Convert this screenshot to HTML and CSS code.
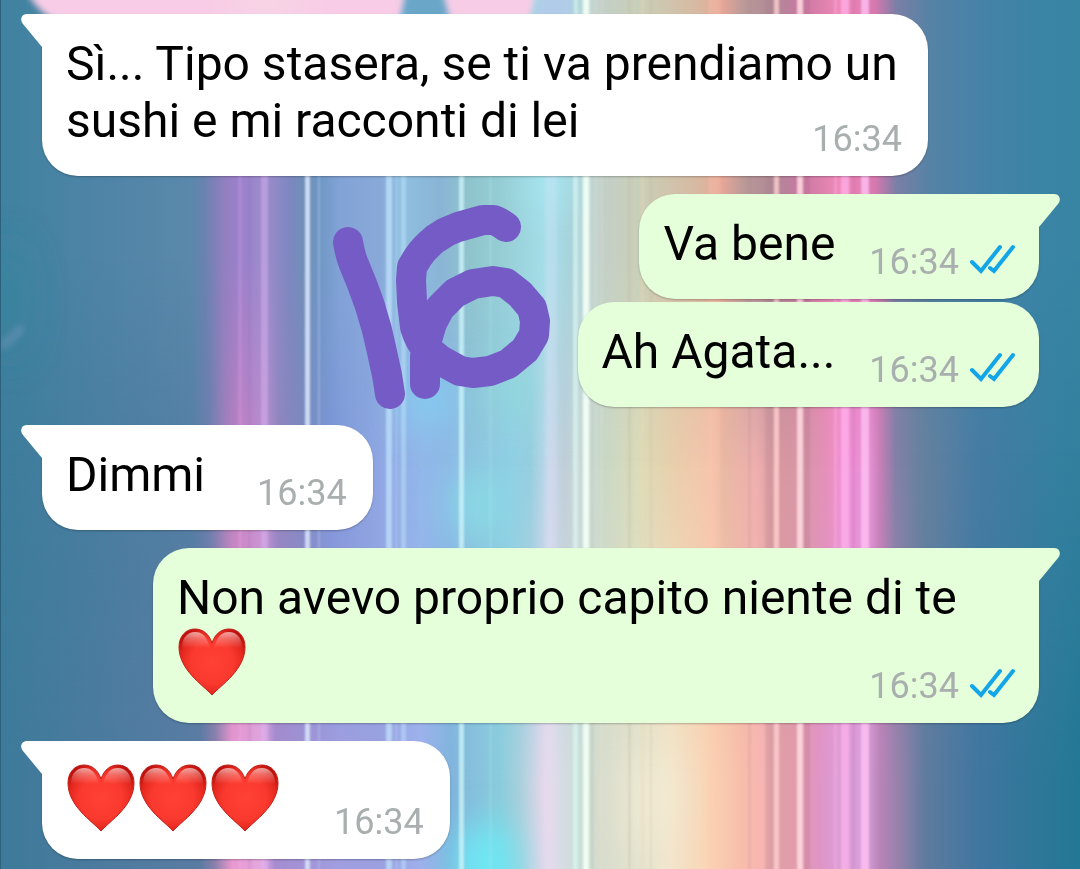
FILE: index.html
```html
<!DOCTYPE html>
<html lang="it">
<head>
  <meta charset="UTF-8">
  <title>Chat</title>
  <meta name="viewport" content="width=device-width, initial-scale=1.0">
  <link rel="stylesheet" href="styles.css">
</head>
<body>
  <!-- Wallpaper -->
  <svg class="wallpaper" viewBox="0 0 1080 869" preserveAspectRatio="none" aria-hidden="true">
    <defs>
      <linearGradient id="upper" gradientUnits="userSpaceOnUse" x1="0" x2="1080" y1="0" y2="0">
        <stop offset="0" stop-color="#3f82a0"/><stop offset=".093" stop-color="#4f84a6"/>
        <stop offset=".176" stop-color="#5a88aa"/><stop offset=".19" stop-color="#6b82b0"/>
        <stop offset=".208" stop-color="#927fc0"/><stop offset=".222" stop-color="#9a80cc"/>
        <stop offset=".245" stop-color="#9d8ccc"/><stop offset=".268" stop-color="#7d87c0"/>
        <stop offset=".282" stop-color="#6f8fb8"/><stop offset=".296" stop-color="#6f97c4"/>
        <stop offset=".315" stop-color="#82a3d6"/><stop offset=".352" stop-color="#88a9d8"/>
        <stop offset=".37" stop-color="#8fc0e0"/><stop offset=".407" stop-color="#8ab4d6"/>
        <stop offset=".435" stop-color="#8fc4cc"/><stop offset=".463" stop-color="#96cdd4"/>
        <stop offset=".509" stop-color="#a6dfea"/><stop offset=".532" stop-color="#a8d0d8"/>
        <stop offset=".546" stop-color="#cde0dc"/><stop offset=".556" stop-color="#c3cfc8"/>
        <stop offset=".593" stop-color="#c9cfb8"/><stop offset=".648" stop-color="#d8b8a0"/>
        <stop offset=".667" stop-color="#e8a898"/><stop offset=".69" stop-color="#b89898"/>
        <stop offset=".718" stop-color="#b08898"/><stop offset=".741" stop-color="#c878a0"/>
        <stop offset=".778" stop-color="#f088b8"/><stop offset=".81" stop-color="#d878b0"/>
        <stop offset=".83" stop-color="#7a7fa6"/><stop offset=".861" stop-color="#5583a5"/>
        <stop offset=".907" stop-color="#4682a8"/><stop offset=".963" stop-color="#3a84a6"/>
        <stop offset="1" stop-color="#3884a3"/>
      </linearGradient>
      <linearGradient id="middle" gradientUnits="userSpaceOnUse" x1="0" x2="1080" y1="0" y2="0">
        <stop offset="0" stop-color="#3d7d9c"/><stop offset=".176" stop-color="#547fa4"/>
        <stop offset=".194" stop-color="#6c7fae"/><stop offset=".211" stop-color="#a87fbc"/>
        <stop offset=".222" stop-color="#c480c2"/><stop offset=".245" stop-color="#bc8fd0"/>
        <stop offset=".259" stop-color="#8f85bd"/><stop offset=".282" stop-color="#7d88c0"/>
        <stop offset=".306" stop-color="#7b95d8"/><stop offset=".352" stop-color="#90a8e4"/>
        <stop offset=".389" stop-color="#92b8ea"/><stop offset=".417" stop-color="#8fb9e8"/>
        <stop offset=".435" stop-color="#8ec3e0"/><stop offset=".472" stop-color="#90d0e6"/>
        <stop offset=".491" stop-color="#95cfe0"/><stop offset=".509" stop-color="#c4d8ea"/>
        <stop offset=".523" stop-color="#c0ced8"/><stop offset=".546" stop-color="#d0e0d8"/>
        <stop offset=".556" stop-color="#c8d8c8"/><stop offset=".593" stop-color="#dcdcb8"/>
        <stop offset=".62" stop-color="#e8d0ac"/><stop offset=".657" stop-color="#f6c4ac"/>
        <stop offset=".671" stop-color="#e8b8a4"/><stop offset=".699" stop-color="#efb0b0"/>
        <stop offset=".722" stop-color="#d898a0"/><stop offset=".745" stop-color="#d898a8"/>
        <stop offset=".764" stop-color="#e690b8"/><stop offset=".782" stop-color="#f490d8"/>
        <stop offset=".806" stop-color="#e490d4"/><stop offset=".815" stop-color="#c880b8"/>
        <stop offset=".829" stop-color="#8480a8"/><stop offset=".852" stop-color="#68829f"/>
        <stop offset=".907" stop-color="#457ca4"/><stop offset=".981" stop-color="#3580a0"/>
        <stop offset="1" stop-color="#337f9e"/>
      </linearGradient>
      <linearGradient id="lower" gradientUnits="userSpaceOnUse" x1="0" x2="1080" y1="0" y2="0">
        <stop offset="0" stop-color="#3d7a9a"/><stop offset=".185" stop-color="#5a7ba2"/>
        <stop offset=".199" stop-color="#8a80ac"/><stop offset=".215" stop-color="#ea98d0"/>
        <stop offset=".243" stop-color="#e4a8e0"/><stop offset=".255" stop-color="#a58cd0"/>
        <stop offset=".315" stop-color="#a09ee0"/><stop offset=".352" stop-color="#9aa0e0"/>
        <stop offset=".389" stop-color="#9fb0ec"/><stop offset=".417" stop-color="#80b4dc"/>
        <stop offset=".435" stop-color="#85bedc"/><stop offset=".463" stop-color="#8accdc"/>
        <stop offset=".481" stop-color="#a8d0dc"/><stop offset=".505" stop-color="#e8d8ec"/>
        <stop offset=".518" stop-color="#d8dce4"/><stop offset=".537" stop-color="#c8ded8"/>
        <stop offset=".556" stop-color="#d8dccc"/><stop offset=".593" stop-color="#e4e4d0"/>
        <stop offset=".62" stop-color="#f2e6cc"/><stop offset=".657" stop-color="#f9d4b4"/>
        <stop offset=".685" stop-color="#f8beaa"/><stop offset=".708" stop-color="#f8b4b4"/>
        <stop offset=".718" stop-color="#dfa0a8"/><stop offset=".741" stop-color="#e29aac"/>
        <stop offset=".759" stop-color="#e094c8"/><stop offset=".773" stop-color="#dc9cd4"/>
        <stop offset=".801" stop-color="#d8a0dc"/><stop offset=".815" stop-color="#b884b8"/>
        <stop offset=".838" stop-color="#8a80a8"/><stop offset=".856" stop-color="#5f7b9e"/>
        <stop offset=".907" stop-color="#3f76a0"/><stop offset="1" stop-color="#227894"/>
      </linearGradient>
      <linearGradient id="fade-out" x2="0" y2="1">
        <stop offset=".3" stop-color="#fff"/><stop offset=".54" stop-color="#000"/>
      </linearGradient>
      <linearGradient id="fade-in" x2="0" y2="1">
        <stop offset=".52" stop-color="#000"/><stop offset=".9" stop-color="#fff"/>
      </linearGradient>
      <mask id="mask-top"><rect width="1080" height="869" fill="url(#fade-out)"/></mask>
      <mask id="mask-bottom"><rect width="1080" height="869" fill="url(#fade-in)"/></mask>
      <filter id="soft" x="-50%" y="-50%" width="200%" height="200%"><feGaussianBlur stdDeviation="18"/></filter>
      <filter id="edge" x="-20%" y="-50%" width="140%" height="200%"><feGaussianBlur stdDeviation="3"/></filter>
      <filter id="line" x="-5%" width="110%"><feGaussianBlur stdDeviation="1 0"/></filter>
    </defs>
    <rect width="1080" height="869" fill="url(#middle)"/>
    <rect width="1080" height="869" fill="url(#upper)" mask="url(#mask-top)"/>
    <rect width="1080" height="869" fill="url(#lower)" mask="url(#mask-bottom)"/>

    <!-- colour glows -->
    <g filter="url(#soft)">
      <ellipse cx="552" cy="185" rx="20" ry="30" fill="#a6f0f8" opacity=".6"/>
      <ellipse cx="430" cy="400" rx="26" ry="30" fill="#80d4f6" opacity=".7"/>
      <ellipse cx="510" cy="390" rx="16" ry="30" fill="#8ee0d8" opacity=".6"/>
      <ellipse cx="476" cy="505" rx="26" ry="36" fill="#88e4e8" opacity=".7"/>
      <ellipse cx="486" cy="865" rx="30" ry="44" fill="#6ceaf6"/>
      <ellipse cx="650" cy="800" rx="24" ry="44" fill="#f4ecd4" opacity=".7"/>
      <ellipse cx="10" cy="300" rx="20" ry="60" fill="#30889c" opacity=".4"/>
    </g>

    <!-- light streaks -->
    <g filter="url(#line)">
      <rect x="238" width="4" height="869" fill="#f0b0f0" opacity=".2"/>
      <rect x="248" width="3" height="869" fill="#8060a0" opacity=".14"/>
      <rect x="261" width="7" height="869" fill="#e0b8f8" opacity=".4"/>
      <rect x="305" width="5" height="869" fill="#dce6fc" opacity=".85"/>
      <rect x="318" width="2" height="869" fill="#b8d0f0" opacity=".4"/>
      <rect x="386" width="6" height="869" fill="#c4e4fc" opacity=".7"/>
      <rect x="395" width="3" height="869" fill="#b8d4f8" opacity=".3"/>
      <rect x="401" width="5" height="869" fill="#c0e4fc" opacity=".5"/>
      <rect x="459" width="5" height="869" fill="#ccf4f8" opacity=".8"/>
      <rect x="489" width="3" height="869" fill="#a8e8e8" opacity=".25"/>
      <rect x="545" width="12" height="869" fill="#e8e0f8" opacity=".25"/>
      <rect x="573" width="5" height="869" fill="#e0fcf4" opacity=".6"/>
      <rect x="583" width="6" height="869" fill="#f2fff6" opacity=".9"/>
      <rect x="590" width="4" height="869" fill="#a8b0a8" opacity=".2"/>
      <rect x="600" width="3" height="869" fill="#e8e8d8" opacity=".2"/>
      <rect x="628" width="3" height="869" fill="#c0b498" opacity=".25"/>
      <rect x="641" width="3" height="869" fill="#f0d8b0" opacity=".35"/>
      <rect x="650" width="2" height="869" fill="#c0a080" opacity=".15"/>
      <rect x="708" width="12" height="869" fill="#ffc8b0" opacity=".25"/>
      <rect x="748" width="3" height="869" fill="#b08080" opacity=".15"/>
      <rect x="765" width="8" height="869" fill="#a07880" opacity=".2"/>
      <rect x="774" width="5" height="869" fill="#ffd0d0" opacity=".8"/>
      <rect x="797" width="6" height="869" fill="#ffdce2" opacity=".85"/>
      <rect x="804" width="6" height="869" fill="#a06880" opacity=".2"/>
      <rect x="834" width="3" height="869" fill="#ffb0e0" opacity=".4"/>
      <rect x="841" width="8" height="869" fill="#ffb4ec" opacity=".7"/>
      <rect x="852" width="3" height="869" fill="#b060a0" opacity=".2"/>
      <rect x="861" width="8" height="869" fill="#ffc0f2" opacity=".8"/>
    </g>

    <!-- pink shapes at the top edge -->
    <path d="M26-10H412Q408 4 398 24H62Q38 14 26-10Z" fill="#f8cce6" filter="url(#edge)"/>
    <path d="M406-10H446L450 24H400Z" fill="#6aa6c8" filter="url(#edge)"/>
    <path d="M442-10H536Q534 10 528 24H452Q446 4 442-10Z" fill="#f6cce6" filter="url(#edge)"/>
    <path d="M540-10H572V24H532Z" fill="#b0cce8" filter="url(#edge)"/>
    <ellipse cx="268" cy="0" rx="40" ry="12" fill="#f6e0e4" opacity=".8" filter="url(#soft)"/>
    <path d="M0 346Q14 340 22 326" fill="none" stroke="#7c98c0" stroke-width="10" opacity=".4" filter="url(#edge)"/>
    <rect width="1" height="869" fill="#2c607c"/>
  </svg>

  <!-- Shared shapes -->
  <svg class="shapes" aria-hidden="true">
    <defs>
      <radialGradient id="red" cx=".5" cy=".5" r=".58">
        <stop offset="0" stop-color="#ff4034"/><stop offset=".55" stop-color="#fb3a2f"/>
        <stop offset=".82" stop-color="#e4281e"/><stop offset="1" stop-color="#bd0f0c"/>
      </radialGradient>
      <linearGradient id="shine" x2="0" y2="1">
        <stop offset="0" stop-color="#fff" stop-opacity=".6"/><stop offset=".4" stop-color="#fff" stop-opacity=".3"/><stop offset="1" stop-color="#fff" stop-opacity="0"/>
      </linearGradient>
    </defs>
    <symbol id="heart" viewBox="0 0 72 70">
      <path d="M35 69C26 59 2 44 2 21C2 10 9 3 18 3C26 3 32 8 35 17C38 8 44 3 52 3C61 3 68 10 68 21C68 44 44 59 35 69Z" fill="url(#red)" stroke="#c2201a" stroke-width="1"/>
      <path d="M5 22C5 11 11 6 18 6C25 6 30 10 33 22Z" fill="url(#shine)"/>
      <path d="M37 22C40 10 45 6 52 6C59 6 65 11 65 22Z" fill="url(#shine)"/>
    </symbol>
    <symbol id="ticks" viewBox="0 0 46 30">
      <path d="M3 18L12 27L31 3M21 24L25 27L44 3" fill="none" stroke="#12a5e8" stroke-width="4" stroke-linecap="round"/>
    </symbol>
  </svg>

  <main class="chat">
    <div class="msg in tail long">
      <p class="text">Sì... Tipo stasera, se ti va prendiamo un sushi e mi racconti di lei</p>
      <div class="meta"><time>16:34</time></div>
    </div>

    <div class="msg out tail">
      <p class="text">Va bene</p>
      <div class="meta"><time>16:34</time><svg class="ticks" role="img" aria-label="Letto"><use href="#ticks"/></svg></div>
    </div>

    <div class="msg out next">
      <p class="text">Ah Agata...</p>
      <div class="meta"><time>16:34</time><svg class="ticks" role="img" aria-label="Letto"><use href="#ticks"/></svg></div>
    </div>

    <div class="msg in tail">
      <p class="text">Dimmi</p>
      <div class="meta"><time>16:34</time></div>
    </div>

    <div class="msg out tail long">
      <p class="text">Non avevo proprio capito niente di te <svg class="heart" role="img" aria-label="cuore"><use href="#heart"/></svg></p>
      <div class="meta"><time>16:34</time><svg class="ticks" role="img" aria-label="Letto"><use href="#ticks"/></svg></div>
    </div>

    <div class="msg in tail">
      <p class="text"><svg class="heart" role="img" aria-label="cuore"><use href="#heart"/></svg><svg class="heart" role="img" aria-label="cuore"><use href="#heart"/></svg><svg class="heart" role="img" aria-label="cuore"><use href="#heart"/></svg></p>
      <div class="meta"><time>16:34</time></div>
    </div>

    <!-- Freehand marker drawing over the chat -->
    <svg class="marker" viewBox="330 200 224 212" aria-hidden="true">
      <path d="M348 242Q350 254 353 262L362 284L370 306L377 330L382 352L387 375L390 394"/>
      <path d="M506 227Q498 221 493 220L483 220L458 227L446 232L435 239Q424 248 418 257L412 267L411 280L412 302L415 327Q419 340 425 347L440 360L460 371L473 373L490 371L508 364L525 350L534 335L535 321L532 308L520 294L506 283L493 281L473 284L455 293L440 308L432 323L427 340L425 357V384"/>
    </svg>
  </main>
</body>
</html>
```

FILE: styles.css
```css
* { box-sizing: border-box; }
body { margin: 0; background: #457ca4; font-family: Roboto, sans-serif; }
.wallpaper { position: fixed; top: 0; left: 0; width: 100%; height: 100%; z-index: -1; }
.shapes { position: absolute; width: 0; height: 0; }

.chat { position: relative; display: flex; flex-direction: column; gap: 18px; padding: 14px 41px 9px 42px; }

.msg {
  position: relative;
  display: flex;
  max-width: calc(100% - 111px);
  padding: 21px 24px 16px;
  border-radius: 36px;
  box-shadow: 0 1px 2px rgba(0, 0, 0, .25);
}
.in { align-self: flex-start; gap: 52px; padding-right: 26px; background: #fff; }
.out { align-self: flex-end; gap: 34px; background: #e4ffda; }
.next { margin-top: -15px; }

/* bubble tail */
.tail::before {
  content: "";
  position: absolute;
  top: 0;
  left: -21px;
  width: 22px;
  height: 34px;
  background: inherit;
  clip-path: path("M22 0H6C1 0 -2 5 2 10L21 33H22Z");
}
.in.tail { border-top-left-radius: 0; }
.out.tail { border-top-right-radius: 0; }
.out.tail::before { left: auto; right: -21px; transform: scaleX(-1); }

.text { margin: 0; padding-bottom: 11px; font-size: 48px; line-height: 57px; color: #000; }
.meta { display: flex; align-self: flex-end; align-items: flex-start; gap: 10px; font-size: 36px; line-height: 42px; color: #a9aeae; }

/* time sits beside the last line of a wrapped message */
.long { display: grid; }
.long .text, .long .meta { grid-area: 1 / 1; }
.long .meta { justify-self: end; }

.heart { width: 72px; height: 70px; vertical-align: bottom; }
.ticks { width: 46px; height: 30px; margin-top: 3px; }

.marker { position: absolute; top: 200px; left: 330px; width: 224px; height: 212px; fill: none; stroke: #755bc6; stroke-width: 30; stroke-linecap: round; stroke-linejoin: round; }
```
